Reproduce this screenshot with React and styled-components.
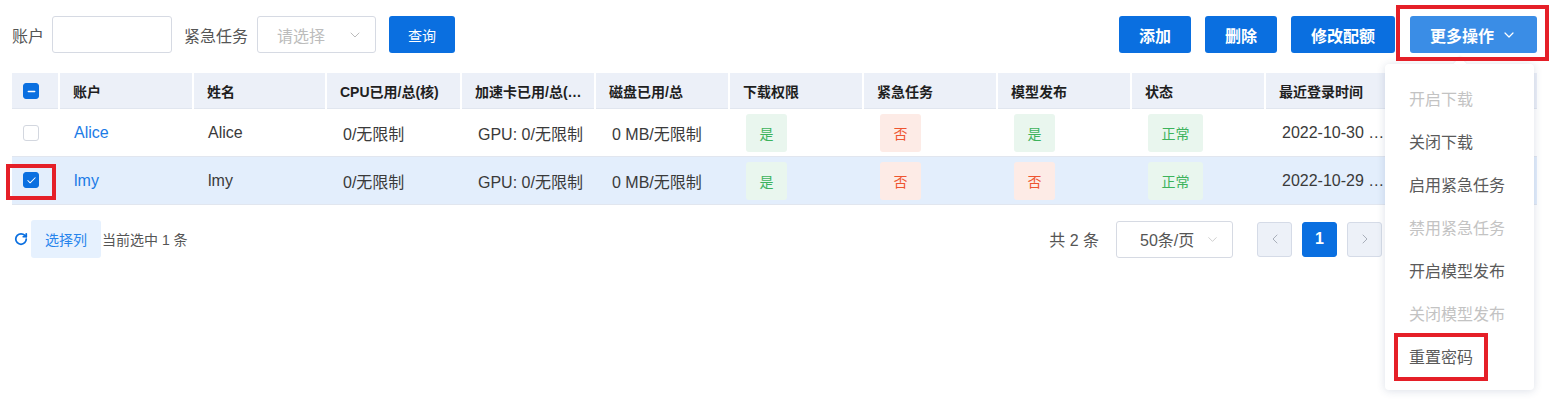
import styled, { createGlobalStyle } from "styled-components";
import { ChevronDown, ChevronLeft, ChevronRight, RotateCw, Check, Minus } from "lucide-react";

const GlobalStyle = createGlobalStyle`
  body {
    margin: 0;
    background: #fff;
    font-family: "Liberation Sans", "Noto Sans CJK SC", sans-serif;
    color: #333;
  }
`;

const Page = styled.div`
  width: 1559px;
  height: 403px;
  box-sizing: border-box;
  padding: 16px 22px 0 12px;
  overflow: hidden;
`;

const Toolbar = styled.div`
  display: flex;
  align-items: center;
  justify-content: space-between;
  height: 37px;
`;

const Group = styled.div`
  display: flex;
  align-items: center;
  gap: ${(p) => p.$gap || 0}px;
`;

const Label = styled.span`
  font-size: 16px;
  color: #555;
  margin-right: ${(p) => p.$mr || 8}px;
`;

const Input = styled.input`
  width: 120px;
  height: 37px;
  box-sizing: border-box;
  border: 1px solid #d6dae3;
  border-radius: 3px;
  margin-right: 12px;
  outline: none;
`;

const Select = styled.div`
  width: ${(p) => p.$w}px;
  height: 37px;
  box-sizing: border-box;
  border: 1px solid #d6dae3;
  border-radius: 3px;
  display: flex;
  align-items: center;
  justify-content: space-between;
  padding: 0 12px 0 ${(p) => p.$pl}px;
  font-size: ${(p) => p.$fs || 16}px;
  color: ${(p) => (p.$placeholder ? "#bcbcbc" : "#555")};
  background: #fff;
  svg {
    color: ${(p) => (p.$placeholder ? "#bcbcbc" : "#c4c4c4")};
  }
`;

const Button = styled.button`
  height: 37px;
  border: none;
  border-radius: 3px;
  background: ${(p) => (p.$light ? "#3a8de6" : "#0a6fe0")};
  color: #fff;
  font-family: inherit;
  font-size: ${(p) => p.$fs || 16}px;
  font-weight: ${(p) => (p.$fs === 14 ? 400 : 700)};
  padding: 0 ${(p) => p.$px || 20}px;
  display: flex;
  align-items: center;
  gap: 7px;
  cursor: pointer;
`;

const Marked = styled.span`
  position: relative;
  display: inline-flex;
  &::after {
    content: "";
    position: absolute;
    top: ${(p) => -p.$t}px;
    right: ${(p) => -p.$r}px;
    bottom: ${(p) => -p.$b}px;
    left: ${(p) => -p.$l}px;
    border: 4px solid #e51f28;
    pointer-events: none;
    z-index: 5;
  }
`;

const MoreWrap = styled.div`
  position: relative;
  margin-left: 1px;
`;

const Menu = styled.ul`
  position: absolute;
  top: calc(100% + 11px);
  right: 3px;
  width: 149px;
  margin: 0;
  padding: 12px 0 13px;
  list-style: none;
  background: #fff;
  border-radius: 4px;
  box-shadow: 0 1px 8px rgba(40, 60, 110, 0.16);
  z-index: 3;
  &::before {
    content: "";
    position: absolute;
    top: -5px;
    left: 50%;
    width: 9px;
    height: 9px;
    background: #fff;
    transform: translateX(-50%) rotate(45deg);
    box-shadow: -1px -1px 2px rgba(40, 60, 110, 0.08);
  }
`;

const MenuItem = styled.li`
  height: 43px;
  display: flex;
  align-items: center;
  padding-left: 24px;
  font-size: 16px;
  color: ${(p) => (p.$disabled ? "#c3c3c3" : "#5a5a5a")};
`;

const Table = styled.table`
  margin-top: 20px;
  width: 1525px;
  border-collapse: collapse;
  table-layout: fixed;
`;

const Th = styled.th`
  height: 35px;
  background: #ecf0f8;
  text-align: left;
  padding: 0 10px 0 13px;
  font-size: 14px;
  font-weight: 700;
  color: #1f1f1f;
  border-left: 2px solid #fff;
  border-bottom: 1px solid #e1e6ef;
  white-space: nowrap;
  overflow: hidden;
  text-overflow: ellipsis;
  &:first-child {
    border-left: none;
    padding: 0 0 0 11px;
  }
`;

const Tr = styled.tr`
  background: ${(p) => (p.$selected ? "#e3eefc" : "#fff")};
`;

const Td = styled.td`
  height: 47px;
  padding: 0 ${(p) => p.$pr || 5}px 0 ${(p) => (p.$pl !== undefined ? p.$pl : 17)}px;
  font-size: 16px;
  color: ${(p) => (p.$link ? "#1b7be6" : "#3a3a3a")};
  border-bottom: 1px solid #e1e6ef;
  white-space: nowrap;
  overflow: hidden;
  text-overflow: ellipsis;
  &:first-child {
    padding: 0 0 0 11px;
    overflow: visible;
  }
`;

const Box = styled.span`
  width: 16px;
  height: 16px;
  box-sizing: border-box;
  border-radius: 3px;
  display: inline-flex;
  align-items: center;
  justify-content: center;
  vertical-align: middle;
  background: ${(p) => (p.$on ? "#0a6fe0" : "#fff")};
  border: 1px solid ${(p) => (p.$on ? "#0a6fe0" : "#d3d7df")};
  color: #fff;
`;

const Tag = styled.span`
  display: inline-flex;
  align-items: center;
  height: 38px;
  padding: 0 13.5px;
  border-radius: 3px;
  font-size: 14px;
  background: ${(p) => (p.$ok ? "#e9f6ee" : "#fdebe6")};
  color: ${(p) => (p.$ok ? "#3db35c" : "#ee5530")};
`;

const Footer = styled.div`
  margin-top: 15px;
  display: flex;
  align-items: center;
  justify-content: space-between;
  padding-left: 2px;
`;

const Refresh = styled.span`
  color: #0a6fe0;
  display: inline-flex;
  margin-right: 3px;
`;

const ColButton = styled.span`
  width: 70px;
  height: 38px;
  display: inline-flex;
  align-items: center;
  justify-content: center;
  background: #e6f1fe;
  border-radius: 3px;
  color: #2684ec;
  font-size: 14px;
  margin-right: 1px;
`;

const Note = styled.span`
  font-size: ${(p) => p.$fs || 14}px;
  color: #555;
  margin-right: ${(p) => p.$mr || 0}px;
`;

const PageBtn = styled.span`
  width: 35px;
  height: 35px;
  box-sizing: border-box;
  border-radius: 3px;
  display: inline-flex;
  align-items: center;
  justify-content: center;
  background: ${(p) => (p.$active ? "#0a6fe0" : "#edf1f8")};
  border: 1px solid ${(p) => (p.$active ? "#0a6fe0" : "#d5dbe7")};
  color: ${(p) => (p.$active ? "#fff" : "#a9afba")};
  font-size: 16px;
  font-weight: 700;
`;

const Pager = styled.div`
  display: flex;
  align-items: center;
  gap: 10px;
  margin-right: 155px;
`;

const columns = [
  { w: 47 },
  { w: 134, title: "账户" },
  { w: 133, title: "姓名" },
  { w: 135, title: "CPU已用/总(核)" },
  { w: 134, title: "加速卡已用/总(卡)" },
  { w: 134, title: "磁盘已用/总" },
  { w: 134, title: "下载权限" },
  { w: 134, title: "紧急任务" },
  { w: 134, title: "模型发布" },
  { w: 134, title: "状态" },
  { w: 134, title: "最近登录时间" },
  { w: 138, title: "操作" },
];

const rows = [
  { account: "Alice", name: "Alice", download: true, urgent: false, model: true, time: "2022-10-30 14:22:08" },
  { account: "lmy", name: "lmy", download: true, urgent: false, model: false, time: "2022-10-29 09:41:53", selected: true },
];

const menu = [
  { label: "开启下载", disabled: true },
  { label: "关闭下载" },
  { label: "启用紧急任务" },
  { label: "禁用紧急任务", disabled: true },
  { label: "开启模型发布" },
  { label: "关闭模型发布", disabled: true },
  { label: "重置密码", marked: true },
];

function Checkbox({ state }) {
  return (
    <Box $on={state !== "off"}>
      {state === "on" && <Check size={11} strokeWidth={2.2} />}
      {state === "some" && <Minus size={11} strokeWidth={3} />}
    </Box>
  );
}

const yesNo = (v) => <Tag $ok={v}>{v ? "是" : "否"}</Tag>;

export default function App() {
  return (
    <Page>
      <GlobalStyle />
      <Toolbar>
        <Group>
          <Label>账户</Label>
          <Input />
          <Label $mr={9}>紧急任务</Label>
          <Select $w={119} $pl={19} $placeholder>
            请选择
            <ChevronDown size={16} strokeWidth={1.5} />
          </Select>
          <Button $fs={14} $px={19} style={{ marginLeft: 13 }}>
            查询
          </Button>
        </Group>
        <Group $gap={14}>
          <Button>添加</Button>
          <Button>删除</Button>
          <Button>修改配额</Button>
          <MoreWrap>
            <Marked $t={11} $r={12} $b={8} $l={14}>
              <Button $light $px={20}>
                更多操作
                <ChevronDown size={16} strokeWidth={1.8} />
              </Button>
            </Marked>
            <Menu>
              {menu.map((m) => (
                <MenuItem key={m.label} $disabled={m.disabled}>
                  {m.marked ? (
                    <Marked $t={11} $r={15} $b={13} $l={15}>
                      {m.label}
                    </Marked>
                  ) : (
                    m.label
                  )}
                </MenuItem>
              ))}
            </Menu>
          </MoreWrap>
        </Group>
      </Toolbar>

      <Table>
        <colgroup>
          {columns.map((c, i) => (
            <col key={i} style={{ width: c.w }} />
          ))}
        </colgroup>
        <thead>
          <tr>
            <Th>
              <Checkbox state="some" />
            </Th>
            {columns.slice(1).map((c) => (
              <Th key={c.title}>{c.title}</Th>
            ))}
          </tr>
        </thead>
        <tbody>
          {rows.map((r) => (
            <Tr key={r.account} $selected={r.selected}>
              <Td>
                {r.selected ? (
                  <Marked $t={8} $r={17} $b={12} $l={17}>
                    <Checkbox state="on" />
                  </Marked>
                ) : (
                  <Checkbox state="off" />
                )}
              </Td>
              <Td $link $pl={15}>{r.account}</Td>
              <Td $pl={15}>{r.name}</Td>
              <Td>0/无限制</Td>
              <Td>GPU: 0/无限制</Td>
              <Td>0 MB/无限制</Td>
              <Td>{yesNo(r.download)}</Td>
              <Td>{yesNo(r.urgent)}</Td>
              <Td>{yesNo(r.model)}</Td>
              <Td>
                <Tag $ok>正常</Tag>
              </Td>
              <Td $pr={13}>{r.time}</Td>
              <Td />
            </Tr>
          ))}
        </tbody>
      </Table>

      <Footer>
        <Group>
          <Refresh>
            <RotateCw size={14} strokeWidth={3} />
          </Refresh>
          <ColButton>选择列</ColButton>
          <Note>当前选中 1 条</Note>
        </Group>
        <Pager>
          <Note $fs={16} $mr={7}>共 2 条</Note>
          <Select $w={117} $pl={23} $fs={16} style={{ marginRight: 14 }}>
            50条/页
            <ChevronDown size={15} strokeWidth={1.3} />
          </Select>
          <PageBtn>
            <ChevronLeft size={16} strokeWidth={1.5} />
          </PageBtn>
          <PageBtn $active>1</PageBtn>
          <PageBtn>
            <ChevronRight size={16} strokeWidth={1.5} />
          </PageBtn>
        </Pager>
      </Footer>
    </Page>
  );
}
